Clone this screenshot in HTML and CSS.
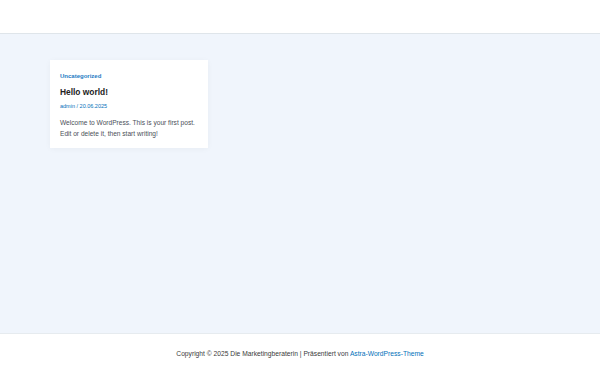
FILE: index.html
```html
<!DOCTYPE html>
<html lang="de">
<head>
    <meta charset="UTF-8">
    <meta name="viewport" content="width=device-width, initial-scale=1.0">
    <title>Die Marketingberaterin</title>
    <link rel="stylesheet" href="styles.css">
</head>
<body>
    <!-- Site Header -->
    <header class="site-header"></header>

    <!-- Posts -->
    <main class="site-content">
        <article class="post-card">
            <a class="post-cat" href="#">Uncategorized</a>
            <h2 class="post-title">Hello world!</h2>
            <div class="post-meta"><a href="#">admin</a> / <a href="#">20.06.2025</a></div>
            <p class="post-excerpt">Welcome to WordPress. This is your first post. Edit or delete it, then start writing!</p>
        </article>
    </main>

    <!-- Footer -->
    <footer class="site-footer">
        Copyright © 2025 Die Marketingberaterin | Präsentiert von <a href="#">Astra-WordPress-Theme</a>
    </footer>
</body>
</html>
```
FILE: styles.css
```css
body {
    margin: 0;
    font-family: "Liberation Sans", Arial, sans-serif;
    color: #4b4f58;
    background: #ffffff;
}

a {
    color: #0170b9;
    text-decoration: none;
}

.site-header {
    height: 33px;
    background: #ffffff;
    border-bottom: 1px solid #dfe5ea;
}

.site-content {
    height: 299px;
    background: #f0f5fc;
    padding: 26px 50px 0;
    box-sizing: border-box;
}

.post-card {
    width: 158px;
    height: 88px;
    box-sizing: border-box;
    background: #ffffff;
    padding: 12px 4px 12px 10px;
    box-shadow: 0 1px 6px rgba(0, 0, 0, 0.04);
}

.post-cat {
    display: block;
    font-size: 6px;
    font-weight: bold;
    line-height: 8px;
    color: #1e7bc4;
}

.post-title {
    margin: 6px 0 0;
    font-size: 8.4px;
    line-height: 12px;
    font-weight: bold;
    color: #222;
}

.post-meta {
    margin-top: 4px;
    font-size: 5.5px;
    line-height: 8px;
    color: #0170b9;
}

.post-excerpt {
    margin: 7px 0 0;
    font-size: 6.6px;
    line-height: 11px;
    color: #4b4f58;
}

.site-footer {
    height: 43px;
    box-sizing: border-box;
    border-top: 1px solid #e6ebef;
    padding-top: 15px;
    text-align: center;
    font-size: 6.7px;
    line-height: 10px;
    color: #3a3a3a;
}
```
